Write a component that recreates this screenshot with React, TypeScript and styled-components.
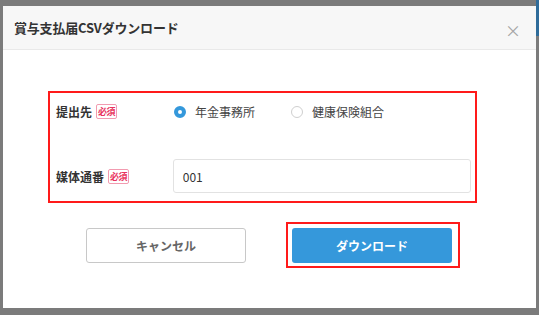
import React from "react";
import styled, { createGlobalStyle } from "styled-components";

const Global = createGlobalStyle`
  html, body { margin: 0; padding: 0; }
  body {
    background: #7b7b7b;
    font-family: "Noto Sans CJK JP", "Noto Sans", sans-serif;
    color: #333;
  }
`;

const Page = styled.div`
  width: 539px;
  height: 315px;
  padding: 6px 3px 0 3px;
  box-sizing: border-box;
  position: relative;
  overflow: hidden;
`;

const Edge = styled.div`
  position: absolute;
  right: 0;
  top: 0;
  width: 3px;
  height: 36px;
  background: #2f6c9a;
`;

const Modal = styled.div`
  width: 533px;
  height: 302px;
  background: #fff;
  display: flex;
  flex-direction: column;
`;

const Header = styled.div`
  height: 44px;
  flex: none;
  box-sizing: border-box;
  background: #f7f7f7;
  border-bottom: 1px solid #e9e9e9;
  display: flex;
  align-items: center;
  justify-content: space-between;
  padding: 0 15px 0 11px;
`;

const Title = styled.div`
  font-size: 13px;
  font-weight: 700;
  color: #333;
  letter-spacing: -0.2px;
`;

const Close = styled.div`
  color: #a5a5a5;
  font-size: 16px;
  line-height: 1;
  margin-top: 4px;
`;

const Body = styled.div`
  padding: 41px 0 0 45px;
  display: flex;
  flex-direction: column;
`;

const Highlight = styled.div`
  width: 429px;
  height: 112px;
  box-sizing: border-box;
  border: 2px solid #ff1a1a;
  padding: 0 4px 0 6px;
  display: flex;
  flex-direction: column;
`;

const Row = styled.div<{ $h: number }>`
  height: ${(p) => p.$h}px;
  display: flex;
  align-items: center;
`;

const Label = styled.div`
  width: 117px;
  display: flex;
  align-items: center;
  gap: 4px;
  font-size: 12px;
  font-weight: 700;
  color: #333;
`;

const Badge = styled.span`
  border: 1px solid #f29bb0;
  color: #e8335e;
  font-size: 9px;
  font-weight: 700;
  line-height: 13px;
  padding: 0 1px;
  border-radius: 2px;
  letter-spacing: -0.5px;
`;

const RadioGroup = styled.div`
  display: flex;
  align-items: center;
  padding-left: 1px;
`;

const RadioItem = styled.label`
  display: flex;
  align-items: center;
  gap: 9px;
  font-size: 12px;
  color: #444;
  margin-right: 36px;
`;

const RadioDot = styled.span<{ $on?: boolean }>`
  width: 12px;
  height: 12px;
  box-sizing: border-box;
  border-radius: 50%;
  border: ${(p) => (p.$on ? "4px solid #3498db" : "1px solid #cfcfcf")};
  background: #fff;
`;

const Input = styled.div`
  width: 299px;
  height: 34px;
  box-sizing: border-box;
  border: 1px solid #e2e2e2;
  border-radius: 3px;
  display: flex;
  align-items: center;
  padding-left: 9px;
  font-size: 12px;
  color: #333;
`;

const Buttons = styled.div`
  display: flex;
  align-items: center;
  margin-top: 19px;
  padding-left: 38px;
`;

const Button = styled.div<{ $primary?: boolean }>`
  width: 160px;
  height: 35px;
  box-sizing: border-box;
  border-radius: 3px;
  display: flex;
  align-items: center;
  justify-content: center;
  font-size: 12px;
  font-weight: 700;
  background: ${(p) => (p.$primary ? "#3598db" : "#fff")};
  color: ${(p) => (p.$primary ? "#fff" : "#666")};
  border: ${(p) => (p.$primary ? "none" : "1px solid #c8c8c8")};
`;

const ButtonFrame = styled.div`
  margin-left: 40px;
  border: 2px solid #ff1a1a;
  padding: 4px 6px 3px 4px;
`;

export default function App() {
  return (
    <>
      <Global />
      <Page>
        <Edge />
        <Modal>
          <Header>
            <Title>賞与支払届CSVダウンロード</Title>
            <Close>×</Close>
          </Header>
          <Body>
            <Highlight>
              <Row $h={33} style={{ marginTop: 2 }}>
                <Label>
                  提出先<Badge>必須</Badge>
                </Label>
                <RadioGroup>
                  <RadioItem>
                    <RadioDot $on />
                    年金事務所
                  </RadioItem>
                  <RadioItem>
                    <RadioDot />
                    健康保険組合
                  </RadioItem>
                </RadioGroup>
              </Row>
              <Row $h={34} style={{ marginTop: 31 }}>
                <Label>
                  媒体通番<Badge>必須</Badge>
                </Label>
                <Input>001</Input>
              </Row>
            </Highlight>
            <Buttons>
              <Button>キャンセル</Button>
              <ButtonFrame>
                <Button $primary>ダウンロード</Button>
              </ButtonFrame>
            </Buttons>
          </Body>
        </Modal>
      </Page>
    </>
  );
}
